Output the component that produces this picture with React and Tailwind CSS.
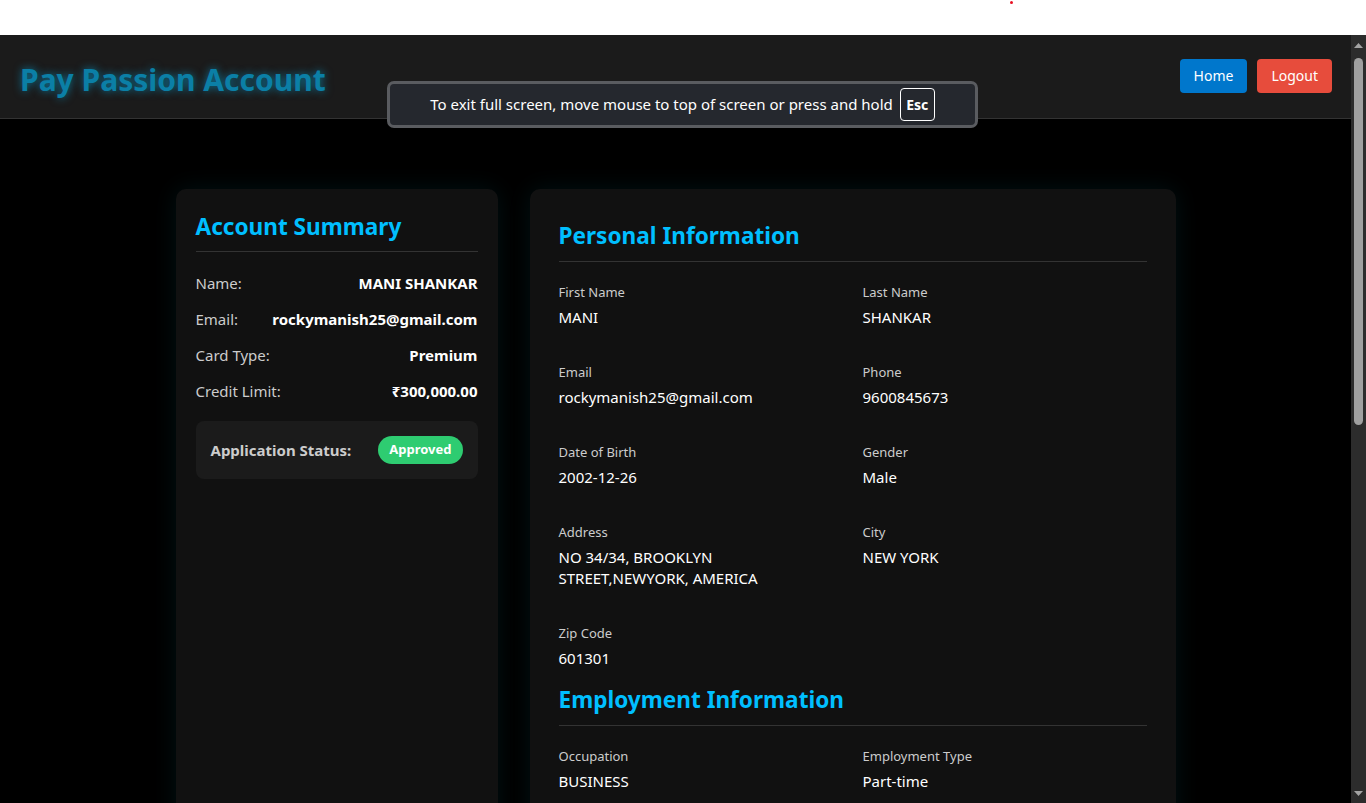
import React from 'react';

const font = { fontFamily: '"Noto Sans", "Open Sans", sans-serif' };

const summary = [
  ['Name:', 'MANI SHANKAR'],
  ['Email:', 'rockymanish25@gmail.com'],
  ['Card Type:', 'Premium'],
  ['Credit Limit:', '₹300,000.00'],
];

const personal = [
  ['First Name', 'MANI'],
  ['Last Name', 'SHANKAR'],
  ['Email', 'rockymanish25@gmail.com'],
  ['Phone', '9600845673'],
  ['Date of Birth', '2002-12-26'],
  ['Gender', 'Male'],
  ['Address', 'NO 34/34, BROOKLYN STREET,NEWYORK, AMERICA'],
  ['City', 'NEW YORK'],
  ['Zip Code', '601301'],
];

const employment = [
  ['Occupation', 'BUSINESS'],
  ['Employment Type', 'Part-time'],
];

function Field({ label, value }) {
  return (
    <div className="flex flex-col">
      <span className="text-[13px] leading-[18px] text-[#cccccc]">{label}</span>
      <span className="mt-[6px] text-[15px] leading-[21px] text-white">{value}</span>
    </div>
  );
}

function Section({ title, items, first }) {
  return (
    <div className={first ? '' : 'mt-[13px]'}>
      <h2 className="border-b border-[#333333] pb-[7px] text-[22.6px] font-bold leading-[36px] text-[#00bfff]">{title}</h2>
      <div className="mt-[21px] grid grid-cols-2 gap-x-5 gap-y-[35px]">
        {items.map(([l, v]) => (
          <Field key={l} label={l} value={v} />
        ))}
      </div>
    </div>
  );
}

function Scrollbar() {
  return (
    <div className="flex w-[15px] flex-col items-center bg-[#2c2c2c]">
      <svg width="15" height="17" viewBox="0 0 15 17" className="mt-[2px]">
        <polygon points="3,11 12,11 7.5,6" fill="#a3a3a3" />
      </svg>
      <div className="mt-[4px] h-[367px] w-[9px] rounded-full bg-[#a0a0a0]" />
      <div className="flex-1" />
      <svg width="15" height="17" viewBox="0 0 15 17" className="mb-[1px]">
        <polygon points="3,6 12,6 7.5,11" fill="#a3a3a3" />
      </svg>
    </div>
  );
}

export default function App() {
  return (
    <div className="relative flex h-[803px] w-[1366px] flex-col overflow-hidden bg-black" style={font}>
      <div className="relative h-[35px] bg-white">
        <span className="absolute left-[1010px] top-[1px] h-[3px] w-[3px] rounded-full bg-[#e81123]" />
      </div>

      <div className="flex min-h-0 flex-1">
        <div className="min-w-0 flex-1 overflow-hidden bg-black">
          <header className="flex h-[84px] items-center justify-between border-b border-[#333333] bg-[#1b1b1b] pl-5 pr-[20px]">
            <h1 className="mt-[5px] text-[30px] font-bold text-[#0b7fa6] [text-shadow:0_0_8px_rgba(0,191,255,0.55)]">
              Pay Passion Account
            </h1>
            <div className="-mr-[1px] -mt-[2px] flex gap-[10px]">
              <button className="h-[34px] rounded-[4px] bg-[#0077cc] px-[14px] text-[14px] text-white">Home</button>
              <button className="h-[34px] rounded-[4px] bg-[#e74c3c] px-[14px] text-[14px] text-white">Logout</button>
            </div>
          </header>

          <main className="mx-auto grid max-w-[1000px] grid-cols-[322px_1fr] gap-8 pt-[70px]">
            <aside className="rounded-[10px] bg-[#111111] p-5 shadow-[0_0_24px_rgba(0,200,220,0.09)]">
              <h2 className="border-b border-[#333333] pb-[6px] text-[22.6px] font-bold leading-[36px] text-[#00bfff]">
                Account Summary
              </h2>
              <div className="mt-5 flex flex-col gap-[14px]">
                {summary.map(([l, v]) => (
                  <div key={l} className="flex items-center justify-between text-[15px] leading-[22px]">
                    <span className="text-[#cccccc]">{l}</span>
                    <span className="font-bold text-white">{v}</span>
                  </div>
                ))}
              </div>
              <div className="mt-[19px] flex h-[58px] items-center justify-between rounded-[8px] bg-[#1b1b1b] px-[15px]">
                <span className="mt-[1px] text-[15px] font-bold text-[#cccccc]">Application Status:</span>
                <span className="flex h-[28px] items-center rounded-full bg-[#2ecc71] px-[11px] text-[13px] font-bold text-white">
                  Approved
                </span>
              </div>
            </aside>

            <section className="rounded-[10px] bg-[#111111] p-[29px] pb-10 shadow-[0_0_24px_rgba(0,200,220,0.09)]">
              <Section title="Personal Information" items={personal} first />
              <Section title="Employment Information" items={employment} />
            </section>
          </main>
        </div>
        <Scrollbar />
      </div>

      <div className="absolute left-[387px] top-[81px] flex h-[47px] w-[591px] items-center justify-center gap-[7px] rounded-[7px] border-[3px] border-[#5a5c60] bg-[#25282e] text-[15px] text-white">
        <span>To exit full screen, move mouse to top of screen or press and hold</span>
        <span className="flex h-[33px] w-[35px] items-center justify-center rounded-[4px] border border-white text-[14px] font-bold">
          Esc
        </span>
      </div>
    </div>
  );
}
